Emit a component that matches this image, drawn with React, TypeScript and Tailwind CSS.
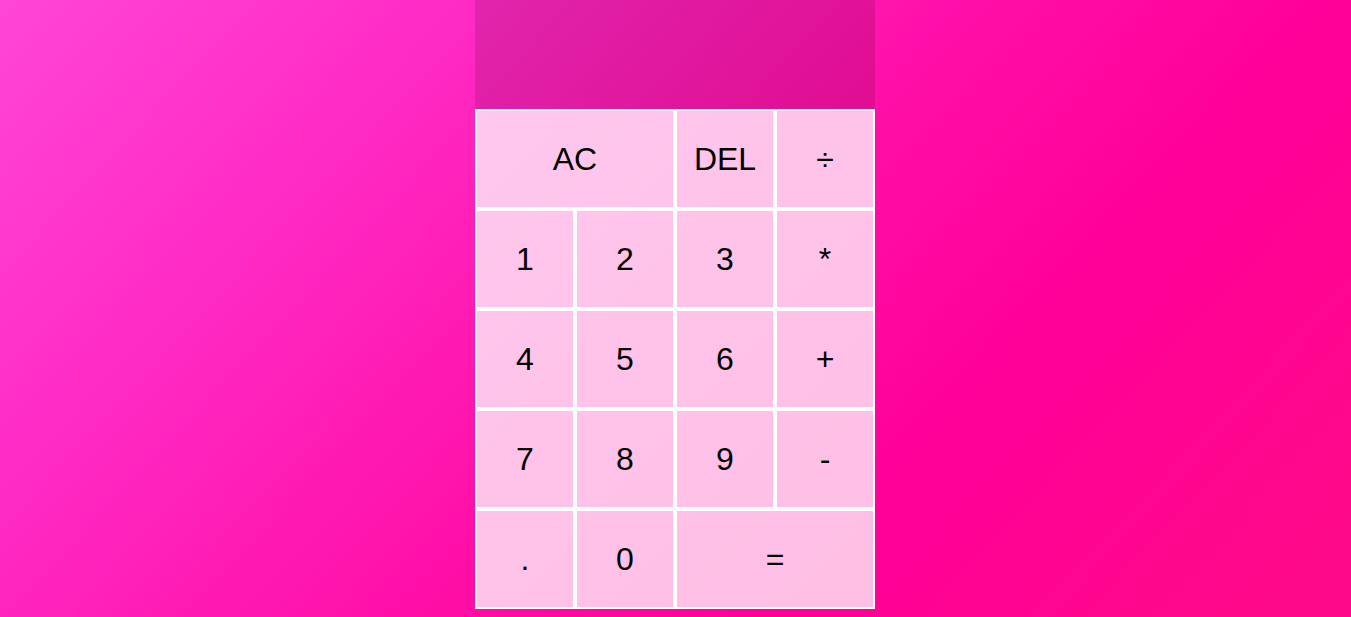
const keys: { label: string; span?: boolean }[] = [
  { label: "AC", span: true },
  { label: "DEL" },
  { label: "÷" },
  { label: "1" },
  { label: "2" },
  { label: "3" },
  { label: "*" },
  { label: "4" },
  { label: "5" },
  { label: "6" },
  { label: "+" },
  { label: "7" },
  { label: "8" },
  { label: "9" },
  { label: "-" },
  { label: "." },
  { label: "0" },
  { label: "=", span: true },
];

export default function App() {
  return (
    <div className="min-h-screen pr-px bg-[linear-gradient(133deg,#ff46d6_0%,#ff2cc6_23%,#ff10a8_50%,#ff0099_70%,#ff0a88_97%)] font-['Liberation_Sans',Arial,sans-serif]">
      <div className="grid grid-cols-[repeat(4,100px)] grid-rows-[109px_repeat(5,100px)] justify-center">
        <div className="col-span-4 bg-black/[0.12]" />
        {keys.map((k) => (
          <button
            key={k.label}
            className={`border-2 border-white bg-white/75 text-[2rem] text-black outline-none hover:bg-white/90 ${
              k.span ? "col-span-2" : ""
            }`}
          >
            {k.label}
          </button>
        ))}
      </div>
    </div>
  );
}
